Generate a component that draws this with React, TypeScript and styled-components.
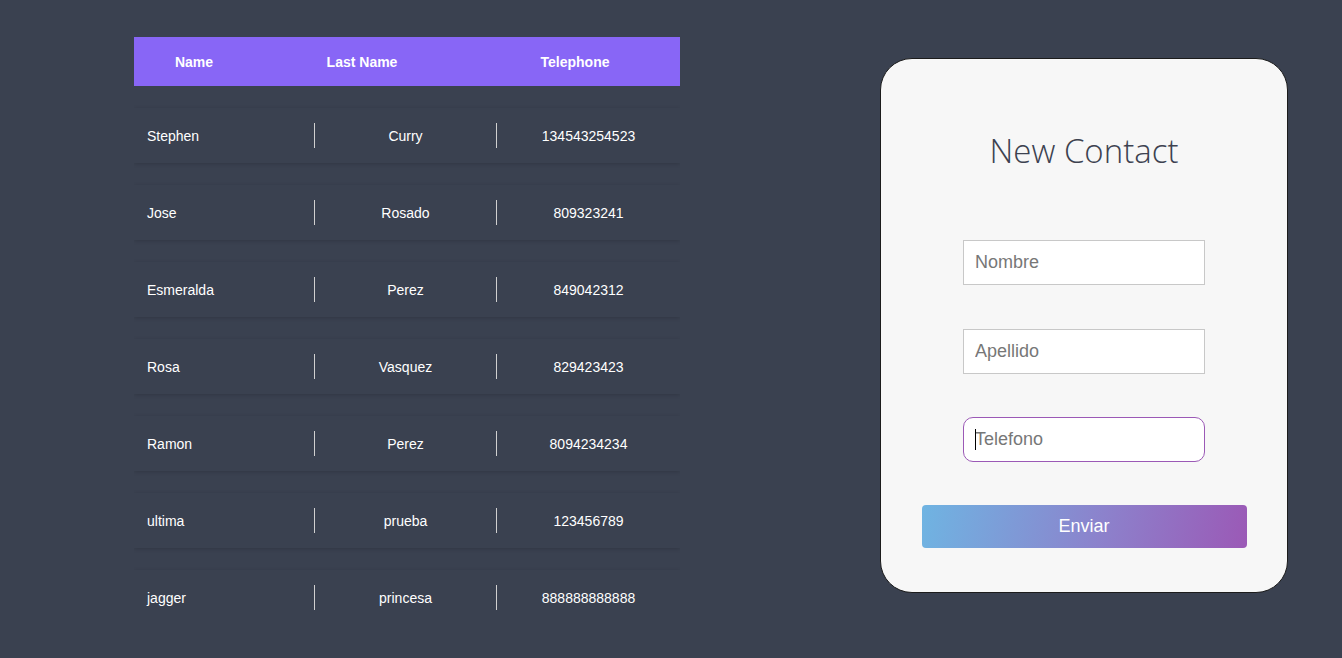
import React from 'react';
import styled, { createGlobalStyle } from 'styled-components';

const GlobalStyle = createGlobalStyle`
  html, body {
    margin: 0;
    padding: 0;
    background: #3a4150;
    font-family: 'Liberation Sans', Arial, sans-serif;
  }
  * {
    box-sizing: border-box;
  }
`;

const Page = styled.div`
  display: flex;
  align-items: flex-start;
  width: 1342px;
  height: 658px;
  padding: 37px 0 0 134px;
  overflow: hidden;
`;

const TableArea = styled.div`
  width: 546px;
  height: 586px;
  overflow: hidden;
`;

const HeaderRow = styled.div`
  display: grid;
  grid-template-columns: 120px 216px 210px;
  align-items: center;
  height: 49px;
  background: #8866f6;
  color: #ffffff;
  font-size: 14px;
  font-weight: 700;
`;

const HeaderCell = styled.div`
  text-align: center;
`;

const Row = styled.div`
  display: grid;
  grid-template-columns: 180px 182px 184px;
  align-items: center;
  height: 55px;
  margin-top: 22px;
  background: #3a4150;
  box-shadow: 0 1px 4px rgba(0, 0, 0, 0.16);
  color: #ffffff;
  font-size: 14px;
`;

const Cell = styled.div<{ $first?: boolean }>`
  display: flex;
  align-items: center;
  justify-content: ${({ $first }) => ($first ? 'flex-start' : 'center')};
  height: 25px;
  padding-left: ${({ $first }) => ($first ? '13px' : '0')};
  border-left: ${({ $first }) => ($first ? 'none' : '1px solid #d0d0d0')};
`;

const Card = styled.div`
  display: flex;
  flex-direction: column;
  align-items: center;
  width: 408px;
  height: 535px;
  margin: 21px 0 0 200px;
  padding-top: 71px;
  background: #f7f7f7;
  border: 1px solid #1c1c1c;
  border-radius: 32px;
`;

const Title = styled.h1`
  margin: 0 0 68px;
  font-family: 'Open Sans', sans-serif;
  font-weight: 300;
  font-size: 33px;
  line-height: 42px;
  color: #3d4250;
`;

const Field = styled.div`
  position: relative;
  margin-bottom: 44px;
  &:nth-of-type(2) {
    margin-bottom: 43px;
  }
  &:nth-of-type(3) {
    margin-bottom: 43px;
  }
`;

const Input = styled.input<{ $active?: boolean }>`
  display: block;
  width: 242px;
  height: 45px;
  padding: 0 11px;
  background: #ffffff;
  border: 1px solid ${({ $active }) => ($active ? '#9b59b6' : '#c8c8c8')};
  border-radius: ${({ $active }) => ($active ? '10px' : '0')};
  font-family: 'Liberation Sans', Arial, sans-serif;
  font-size: 18px;
  color: #333;
  outline: none;
  &::placeholder {
    color: #777;
  }
`;

const Caret = styled.span`
  position: absolute;
  left: 12px;
  top: 12px;
  width: 1px;
  height: 21px;
  background: #000;
`;

const SendButton = styled.button`
  width: 325px;
  height: 43px;
  border: none;
  border-radius: 4px;
  background: linear-gradient(100deg, #6fb4e2 0%, #8c82cc 55%, #9b59b6 100%);
  color: #ffffff;
  font-family: 'Liberation Sans', Arial, sans-serif;
  font-size: 18px;
  cursor: pointer;
`;

const contacts = [
  { name: 'Stephen', last: 'Curry', phone: '134543254523' },
  { name: 'Jose', last: 'Rosado', phone: '809323241' },
  { name: 'Esmeralda', last: 'Perez', phone: '849042312' },
  { name: 'Rosa', last: 'Vasquez', phone: '829423423' },
  { name: 'Ramon', last: 'Perez', phone: '8094234234' },
  { name: 'ultima', last: 'prueba', phone: '123456789' },
  { name: 'jagger', last: 'princesa', phone: '888888888888' },
];

const App = () => {
  return (
    <>
      <GlobalStyle />
      <Page>
        <TableArea>
          <HeaderRow>
            <HeaderCell>Name</HeaderCell>
            <HeaderCell>Last Name</HeaderCell>
            <HeaderCell>Telephone</HeaderCell>
          </HeaderRow>
          {contacts.map((c, i) => (
            <Row key={i}>
              <Cell $first>{c.name}</Cell>
              <Cell>{c.last}</Cell>
              <Cell>{c.phone}</Cell>
            </Row>
          ))}
        </TableArea>
        <Card>
          <Title>New Contact</Title>
          <Field>
            <Input placeholder="Nombre" />
          </Field>
          <Field>
            <Input placeholder="Apellido" />
          </Field>
          <Field>
            <Input $active placeholder="Telefono" />
            <Caret />
          </Field>
          <SendButton>Enviar</SendButton>
        </Card>
      </Page>
    </>
  );
};

export default App;
